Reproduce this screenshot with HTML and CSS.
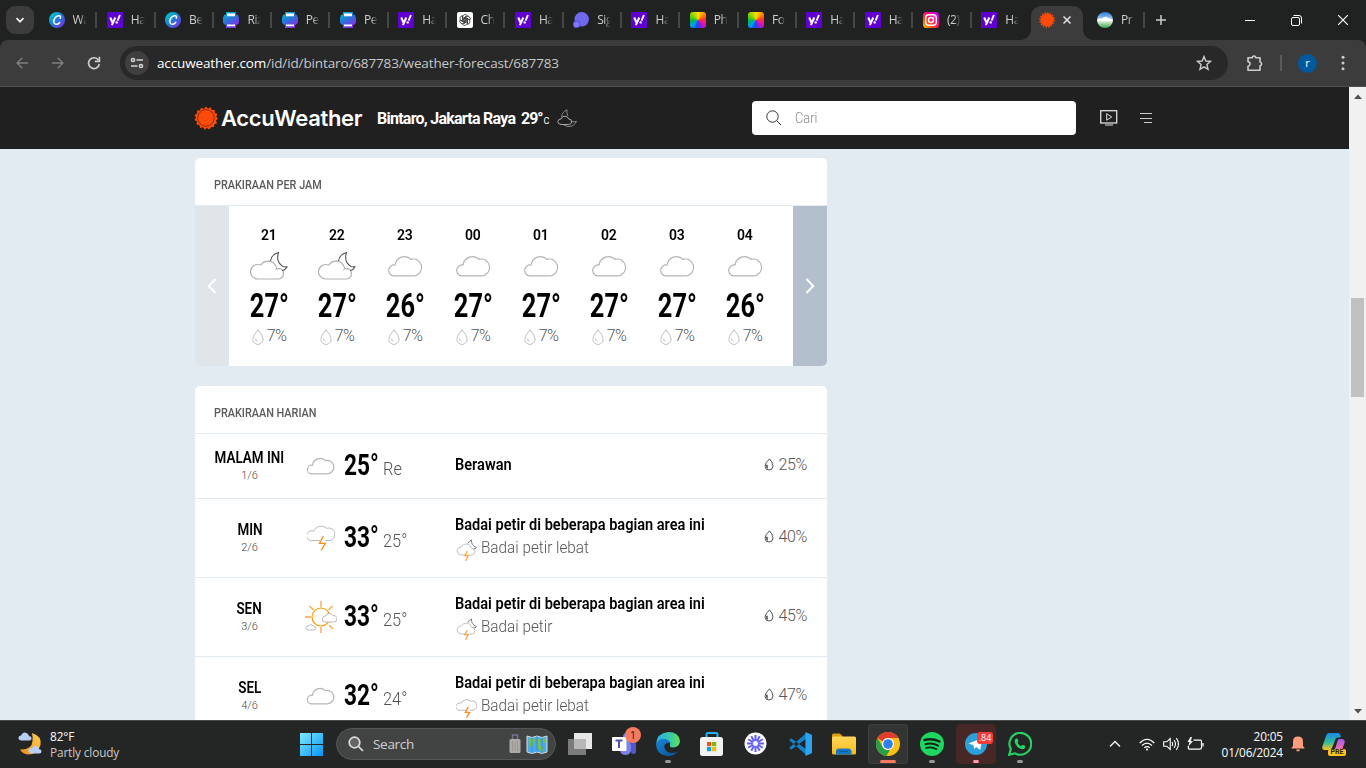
FILE: index.html
```html
<!DOCTYPE html>
<html lang="id">
<head>
<meta charset="utf-8">
<title>Bintaro, Jakarta Raya - AccuWeather</title>
<link rel="stylesheet" href="styles.css">
</head>
<body>
<svg class="defs" width="0" height="0">
  <defs>
    <linearGradient id="gCanva" x1="0" y1="0" x2="1" y2="1"><stop offset=".15" stop-color="#00c4cc"/><stop offset=".5" stop-color="#2378d8"/><stop offset=".95" stop-color="#7d2ae8"/></linearGradient>
    <linearGradient id="gPrint" x1="0" y1="0" x2=".6" y2="1"><stop offset="0" stop-color="#00c4cc"/><stop offset=".5" stop-color="#2378d8"/><stop offset="1" stop-color="#8b2be8"/></linearGradient>
    <linearGradient id="gInsta" x1="0" y1="1" x2="1" y2="0"><stop offset="0" stop-color="#ffc800"/><stop offset=".35" stop-color="#ff4020"/><stop offset=".65" stop-color="#ff0090"/><stop offset="1" stop-color="#9b10ff"/></linearGradient>
    <linearGradient id="gWin" x1="0" y1="0" x2="1" y2="1"><stop offset="0" stop-color="#7deaff"/><stop offset="1" stop-color="#0795f5"/></linearGradient>
    <linearGradient id="gEdge" x1="0" y1="0" x2="1" y2="0"><stop offset="0" stop-color="#2bb2ea"/><stop offset=".6" stop-color="#38cba8"/><stop offset="1" stop-color="#65df51"/></linearGradient>
    <linearGradient id="gEdge2" x1="0" y1="0" x2="1" y2="1"><stop offset="0" stop-color="#1787d8"/><stop offset="1" stop-color="#0c4f96"/></linearGradient>
    <linearGradient id="gFold" x1="0" y1="0" x2="0" y2="1"><stop offset="0" stop-color="#ffd65c"/><stop offset="1" stop-color="#fbb918"/></linearGradient>
    <linearGradient id="gCop" x1="0" y1="0" x2="0" y2="1"><stop offset="0" stop-color="#148de8"/><stop offset=".55" stop-color="#35b99b"/><stop offset="1" stop-color="#ffc61a"/></linearGradient>
    <linearGradient id="gCop2" x1="0" y1="0" x2="0" y2="1"><stop offset="0" stop-color="#a15cf0"/><stop offset="1" stop-color="#ff6e9a"/></linearGradient>
    <linearGradient id="gMoon" x1="1" y1="0" x2="0" y2="1"><stop offset="0" stop-color="#ffd04a"/><stop offset="1" stop-color="#f08a1c"/></linearGradient>
    <linearGradient id="gSky" x1="0" y1="0" x2="0" y2="1"><stop offset="0" stop-color="#2e78d8"/><stop offset=".42" stop-color="#9cc4ee"/><stop offset=".5" stop-color="#ffffff"/><stop offset=".62" stop-color="#d0e8cc"/><stop offset="1" stop-color="#37a548"/></linearGradient>
  </defs>
  <symbol id="canva" viewBox="0 0 16 16"><circle cx="8" cy="8" r="8" fill="url(#gCanva)"/><path d="M11.3 6.200c.7-1.700-.1-2.700-1.600-2.500C6.600 4.100 4.500 7.200 4.800 10c.3 2.900 3.500 3.200 5.900.4" fill="none" stroke="#fff" stroke-width="1.500" stroke-linecap="round"/></symbol>
  <symbol id="yahoo" viewBox="0 0 16 16"><path d="M0 0h16v16H0z" fill="#6001d2"/><path d="M3.200 5.500l2.300 5M8.300 5.500L4.900 13.200" stroke="#fff" stroke-width="2" fill="none"/><path d="M12.900 3l-2.300 5.600" stroke="#fff" stroke-width="1.900"/><circle cx="9.700" cy="10.400" r="1.200" fill="#fff"/></symbol>
  <symbol id="print" viewBox="0 0 16 16"><path d="M3 0h10v2.500l2 .5 1 3v5l-3 2.500V16H3v-2.500L0 11V6l1-3 2-.5z" fill="url(#gPrint)"/><path d="M4 1.500h8v2.700H4zM4 12.500h8v1.800H4z" fill="#fff"/></symbol>
  <symbol id="gpt" viewBox="0 0 16 16"><rect width="16" height="16" rx="2" fill="#fff"/><g fill="none" stroke="#333" stroke-width=".8"><path id="petal" d="M5.600 9.400V5a2.700 2.700 0 0 1 4.900-1.300L7 5.800v3.800"/><use href="#petal" transform="rotate(60 8 8)"/><use href="#petal" transform="rotate(120 8 8)"/><use href="#petal" transform="rotate(180 8 8)"/><use href="#petal" transform="rotate(240 8 8)"/><use href="#petal" transform="rotate(300 8 8)"/></g></symbol>
  <symbol id="signal" viewBox="0 0 16 16"><circle cx="8.700" cy="7.300" r="7.200" fill="#7069ee"/><circle cx="3.600" cy="12.300" r="3.700" fill="#514bd5"/><circle cx="3.600" cy="12.300" r="2.900" fill="#7d78ff"/></symbol>
  <symbol id="insta" viewBox="0 0 16 16"><rect width="16" height="16" rx="3.500" fill="url(#gInsta)"/><rect x="2.700" y="2.700" width="10.600" height="10.600" rx="3" fill="none" stroke="#fff" stroke-width="1.400"/><circle cx="8" cy="8" r="2.500" fill="none" stroke="#fff" stroke-width="1.400"/><circle cx="11" cy="5" r=".7" fill="#fff"/></symbol>
  <symbol id="hill" viewBox="0 0 16 16"><circle cx="8" cy="8" r="8" fill="url(#gSky)"/><path d="M.2 8.500Q2 5.500 5 6.500 8 3.500 11 6q3-.5 4.800 2.500z" fill="#fff"/></symbol>
  <symbol id="sun" viewBox="0 0 24 24"><path fill="#ff4b0a" d="M12 .5l2 2.200 2.700-1.400 1 2.800 3-.1.100 3 2.700 1.100-1.300 2.700L24 12.500l-2 2.100 1 2.800-2.800.9-.3 3-2.900-.3L15.500 23.500 13 22l-2.400 1.700-1.600-2.500-2.900.7-.6-2.900-3-.4.500-3L.5 14 2 11.400.5 9l2.700-1.500-.2-3 3 .1 1-2.900 2.800 1.200z"/><circle cx="12" cy="12" r="8.300" fill="none" stroke="#69240f" stroke-width=".8"/></symbol>
  <symbol id="sunsmall" viewBox="0 0 16 16"><circle cx="8" cy="8" r="6.500" fill="#ff4b0a"/><circle cx="8" cy="8" r="7" fill="none" stroke="#ff4b0a" stroke-width="1.600" stroke-dasharray="1.500 1.250"/></symbol>
  <symbol id="cloud" viewBox="0 0 36 22"><path d="M6.300 20.800A5.400 5.400 0 1 1 8.100 10 9.400 9.400 0 0 1 24 4.300 8.400 8.400 0 1 1 26.500 20.800Z" fill="none" stroke="currentColor" stroke-width="1.200" vector-effect="non-scaling-stroke"/></symbol>
  <symbol id="mooncloud" viewBox="0 0 38 30"><path d="M7.500 28A6.800 6.800 0 0 1 8 13.500q2 0 3 .5A8.500 8.500 0 0 1 25.500 14.500q1.500 3 1 3.500 6.500-1.800 7 4.500-.2 5-5 5.500Z" fill="none" stroke="#b0b0b0" stroke-width="1.200"/><path d="M20.500 10Q21.500 3.500 28.500 1.500 25.500 11 33 15.500 35 16 37 15.800 35 19.500 32 19.500" fill="none" stroke="#555" stroke-width="1.100"/></symbol>
  <symbol id="storm" viewBox="0 0 28 27"><path d="M13 16.500H6A5 5 0 1 1 6.700 7.200 8 8 0 0 1 19.500 4.300 6.400 6.400 0 1 1 20 16.500H18.500" fill="none" stroke="#b8b8b8" vector-effect="non-scaling-stroke"/><path d="M16.500 12l-4 7.300h5.800L14 26.500" fill="none" stroke="#ff8a15" stroke-width="1.300" vector-effect="non-scaling-stroke"/></symbol>
  <symbol id="moonstorm" viewBox="0 0 21 22"><path d="M8.500 16H5Q1 15.500 1 11.800 1.500 8 5.500 8 7 4.500 11 5q3.500.5 4.300 4Q19 9.500 19 12.500T16 16H13" fill="none" stroke="#c3c3c3"/><path d="M12 4.500Q13 2 15.500 1q-.5 5.500 5 7.500-1 1.800-3 1.500" fill="none" stroke="#777"/><path d="M11.500 12L8.500 16.500h3.800L9.500 22" fill="none" stroke="#ffa64d" stroke-width="1.300"/></symbol>
  <symbol id="suncloud" viewBox="0 0 32 32"><circle cx="16" cy="16" r="9" fill="#fff" stroke="#f90" stroke-width="1.200"/><path d="M16 0v6M16 26v6M0 16h6M4.500 5l4 4M27.500 5l-4 4M24 24l4 4" stroke="#ffa142" stroke-width="1.300"/><path d="M20 21a3 3 0 0 1 .6-6 4 4 0 0 1 7.300-.5Q32 14.500 32 18q0 3-3.500 3zM3 29q-3-1-2-3 1-1.500 2.500-1Q6 22 8.500 25q2 .5 2 2.200T8.500 29z" fill="#fff" stroke="#b8b8b8"/></symbol>
  <symbol id="drop" viewBox="0 0 12 16"><path d="M6 .8Q1 6.500.8 10.200A5.200 5.200 0 0 0 11.200 10.200Q11 6.500 6 .8Z" fill="none" stroke="currentColor"/><path d="M3.600 9.500q.2 2.500 1.700 3" fill="none" stroke="currentColor"/></symbol>
  <symbol id="drop2" viewBox="0 0 10 13"><path d="M5.500.8Q1 5 1 8.300 1.300 12 5 12T9 8Q8.500 4 5.500.8Z" fill="none" stroke="#555"/><path d="M2 7q1-.8 1.700 0l.2 4q-1.400-.5-1.900-2z" fill="#555"/></symbol>
</svg>

<div class="screen">
  <div class="tabs">
    <div class="tabsearch"><svg width="10" height="10" viewBox="0 0 10 10"><path d="M1.500 3.200L5 6.700l3.500-3.500" fill="none" stroke="#eee" stroke-width="1.700"/></svg></div>
    <div class="tab"><svg><use href="#canva"/></svg><span>Wa</span></div>
    <div class="tab"><svg><use href="#yahoo"/></svg><span>Ha</span></div>
    <div class="tab"><svg><use href="#canva"/></svg><span>Be</span></div>
    <div class="tab"><svg><use href="#print"/></svg><span>Riz</span></div>
    <div class="tab"><svg><use href="#print"/></svg><span>Pe</span></div>
    <div class="tab"><svg><use href="#print"/></svg><span>Pe</span></div>
    <div class="tab"><svg><use href="#yahoo"/></svg><span>Ha</span></div>
    <div class="tab"><svg><use href="#gpt"/></svg><span>Ch</span></div>
    <div class="tab"><svg><use href="#yahoo"/></svg><span>Ha</span></div>
    <div class="tab"><svg><use href="#signal"/></svg><span>Sig</span></div>
    <div class="tab"><svg><use href="#yahoo"/></svg><span>Ha</span></div>
    <div class="tab"><i class="wheel"></i><span>Ph</span></div>
    <div class="tab"><i class="wheel"></i><span>Fo</span></div>
    <div class="tab"><svg><use href="#yahoo"/></svg><span>Ha</span></div>
    <div class="tab"><svg><use href="#yahoo"/></svg><span>Ha</span></div>
    <div class="tab"><svg><use href="#insta"/></svg><span>(2)</span></div>
    <div class="tab nodiv"><svg><use href="#yahoo"/></svg><span>Ha</span></div>
    <div class="tab active"><svg class="fav"><use href="#sunsmall"/></svg><svg class="x" viewBox="0 0 8 8"><path d="M.5.5l7 7M7.500.5l-7 7" stroke="#e3e3e3" stroke-width="1.500"/></svg></div>
    <div class="tab last"><svg><use href="#hill"/></svg><span>Pr</span></div>
    <svg class="plus" viewBox="0 0 10 10"><path d="M5 0v10M0 5h10" stroke="#ccc" stroke-width="1.500"/></svg>
    <div class="winbtns">
      <svg width="10" height="12" viewBox="0 0 10 12"><path d="M0 6.500h10" stroke="#fff"/></svg>
      <svg width="11" height="11" viewBox="0 0 11 11" fill="none" stroke="#fff"><rect x=".5" y="2.500" width="8" height="8" rx="1.500"/><path d="M2.500.5H8Q10.500.5 10.500 3v5.500"/></svg>
      <svg width="10" height="10" viewBox="0 0 10 10"><path d="M0 0l10 10M10 0L0 10" stroke="#fff" stroke-width="1.100"/></svg>
    </div>
  </div>

  <div class="toolbar">
    <svg class="nav" width="12" height="12" viewBox="0 0 12 12" fill="none" stroke="#7d7d7d" stroke-width="1.400"><path d="M12 6H1M6.300.7L1 6l5.300 5.300"/></svg>
    <svg class="nav" width="12" height="12" viewBox="0 0 12 12" fill="none" stroke="#7d7d7d" stroke-width="1.400"><path d="M0 6h11M5.700.7L11 6l-5.300 5.300"/></svg>
    <svg class="nav" width="14" height="14" viewBox="0 0 14 14" fill="none" stroke="#ccc" stroke-width="1.700"><path d="M11.500 4.200A5.400 5.400 0 1 0 12.300 8"/><path d="M12.400.7v4.600H7.800"/></svg>
    <div class="omnibox">
      <div class="site"><svg width="14" height="12" viewBox="0 0 14 12" fill="none" stroke="#d5d5d5" stroke-width="1.500"><circle cx="3" cy="3" r="1.600"/><path d="M6.500 3H13M1 9h6.500"/><circle cx="11" cy="9" r="1.600"/></svg></div>
      <span class="url"><b>accuweather.com</b>/id/id/bintaro/687783/weather-forecast/687783</span>
      <svg class="star" width="16" height="16" viewBox="0 0 16 16"><path d="M8 1.500l1.800 4.500 4.700.4-3.600 3.100 1.100 4.800L8 11.800l-4 2.500 1.100-4.800L1.500 6.400 6.200 6z" fill="none" stroke="#ccc" stroke-width="1.400"/></svg>
    </div>
    <svg class="ext" width="17" height="18" viewBox="0 0 17 18"><path d="M2 3.700h4.300Q6.300 2 8 2t1.700 1.700h4.300V8q1.600.3 1.600 1.900T14 11.800v4.400H2v-4q2-.4 2-2.300T2 7.800z" fill="none" stroke="#ccc" stroke-width="1.600" stroke-linejoin="round"/></svg>
    <i class="vbar"></i>
    <div class="avatar">r</div>
    <svg class="dots" width="4" height="16" viewBox="0 0 4 16" fill="#ccc"><circle cx="2" cy="2.300" r="1.500"/><circle cx="2" cy="8" r="1.500"/><circle cx="2" cy="13.700" r="1.500"/></svg>
  </div>

  <div class="viewport">
    <div class="page">
      <header>
        <svg class="logo"><use href="#sun"/></svg>
        <span class="brand">AccuWeather</span>
        <span class="place">Bintaro, Jakarta Raya</span>
        <span class="now">29°<small>C</small></span>
        <svg class="nowicon" width="20" height="19" viewBox="0 0 20 19" fill="none" stroke="#8a8a8a"><path d="M4 15.500Q.7 15 .8 12.500 1.200 10 4 10 5 7 8 7.200q3 .3 3.700 2.800 3.300.3 3 3-.5 2.500-3 2.500z" stroke="#aaa"/><path d="M4.500 8Q5 3 10 .8 9.300 4 11 7M15 12.500q3 1 4.500-.2Q17 17.500 12 17.500q-3 0-5-1.500"/></svg>
        <div class="searchbox"><svg width="16" height="16" viewBox="0 0 16 16" fill="none" stroke="#333"><circle cx="6.500" cy="6.500" r="5.700"/><path d="M10.500 10.500L15 15"/></svg><span>Cari</span></div>
        <svg class="tv" width="18" height="16" viewBox="0 0 18 16" fill="none" stroke="#ddd"><rect x=".7" y=".7" width="16" height="12.300" stroke-width="1.300"/><path d="M6.700 3.700v6.500l5-3.200z"/><path d="M5 15h8"/></svg>
        <svg class="menu" width="12" height="12" viewBox="0 0 12 12" stroke="#ccc"><path d="M0 1.500h12M0 6.500h12M4 10.500h8"/></svg>
      </header>

      <main>
        <section class="card">
          <h2><span>PRAKIRAAN PER JAM</span></h2>
          <div class="hourly">
            <div class="arrow prev"><svg width="10" height="16" viewBox="0 0 10 16"><path d="M8.500 1L1.800 8l6.700 7" fill="none" stroke="#fff" stroke-width="2"/></svg></div>
            <div class="hours">
              <div class="hour"><b>21</b><svg class="mc"><use href="#mooncloud"/></svg><strong>27°</strong><span><svg><use href="#drop"/></svg>7%</span></div>
              <div class="hour"><b>22</b><svg class="mc"><use href="#mooncloud"/></svg><strong>27°</strong><span><svg><use href="#drop"/></svg>7%</span></div>
              <div class="hour"><b>23</b><svg class="cl"><use href="#cloud"/></svg><strong>26°</strong><span><svg><use href="#drop"/></svg>7%</span></div>
              <div class="hour"><b>00</b><svg class="cl"><use href="#cloud"/></svg><strong>27°</strong><span><svg><use href="#drop"/></svg>7%</span></div>
              <div class="hour"><b>01</b><svg class="cl"><use href="#cloud"/></svg><strong>27°</strong><span><svg><use href="#drop"/></svg>7%</span></div>
              <div class="hour"><b>02</b><svg class="cl"><use href="#cloud"/></svg><strong>27°</strong><span><svg><use href="#drop"/></svg>7%</span></div>
              <div class="hour"><b>03</b><svg class="cl"><use href="#cloud"/></svg><strong>27°</strong><span><svg><use href="#drop"/></svg>7%</span></div>
              <div class="hour"><b>04</b><svg class="cl"><use href="#cloud"/></svg><strong>26°</strong><span><svg><use href="#drop"/></svg>7%</span></div>
            </div>
            <div class="arrow next"><svg width="10" height="16" viewBox="0 0 10 16"><path d="M1.500 1l6.700 7-6.700 7" fill="none" stroke="#fff" stroke-width="2"/></svg></div>
          </div>
        </section>

        <section class="card daily">
          <h2><span>PRAKIRAAN HARIAN</span></h2>
          <div class="day short">
            <div class="date"><b>MALAM INI</b><small>1/6</small></div>
            <div class="ico"><svg class="dc"><use href="#cloud"/></svg></div>
            <div class="temp"><b>25°</b><span>Re</span></div>
            <div class="phrase"><b>Berawan</b></div>
            <div class="pct"><svg><use href="#drop2"/></svg><span>25%</span></div>
          </div>
          <div class="day">
            <div class="date"><b>MIN</b><small>2/6</small></div>
            <div class="ico"><svg class="ds"><use href="#storm"/></svg></div>
            <div class="temp"><b>33°</b><span>25°</span></div>
            <div class="phrase"><b>Badai petir di beberapa bagian area ini</b><p><svg><use href="#moonstorm"/></svg><span>Badai petir lebat</span></p></div>
            <div class="pct"><svg><use href="#drop2"/></svg><span>40%</span></div>
          </div>
          <div class="day">
            <div class="date"><b>SEN</b><small>3/6</small></div>
            <div class="ico"><svg class="dsun"><use href="#suncloud"/></svg></div>
            <div class="temp"><b>33°</b><span>25°</span></div>
            <div class="phrase"><b>Badai petir di beberapa bagian area ini</b><p><svg><use href="#moonstorm"/></svg><span>Badai petir</span></p></div>
            <div class="pct"><svg><use href="#drop2"/></svg><span>45%</span></div>
          </div>
          <div class="day">
            <div class="date"><b>SEL</b><small>4/6</small></div>
            <div class="ico"><svg class="dc"><use href="#cloud"/></svg></div>
            <div class="temp"><b>32°</b><span>24°</span></div>
            <div class="phrase"><b>Badai petir di beberapa bagian area ini</b><p><svg class="mini"><use href="#storm"/></svg><span>Badai petir lebat</span></p></div>
            <div class="pct"><svg><use href="#drop2"/></svg><span>47%</span></div>
          </div>
        </section>
      </main>
    </div>
    <div class="scroll">
      <svg width="8" height="5" viewBox="0 0 8 5"><path d="M0 5l4-4.500L8 5z" fill="#505050"/></svg>
      <i></i>
      <svg class="down" width="8" height="5" viewBox="0 0 8 5"><path d="M0 0l4 4.500L8 0z" fill="#505050"/></svg>
    </div>
  </div>

  <footer class="taskbar">
    <div class="weather">
      <svg width="24" height="24" viewBox="0 0 24 24"><path d="M14 1Q24 4 22.500 13 19.500 22.500 10 22.500 4.500 22 2 17.500 14 18 14.500 9 15 5 14 1z" fill="url(#gMoon)"/><path d="M3 8.500Q0 8 .5 5.500 1 3.500 3 3.500 5-.5 8.500 1q2 .8 2.500 3 3 .5 2.500 3Q13 8.500 11 8.500zM13 21.500q-3-.5-2.500-3.500.8-2.500 3.500-2Q17 12 20 15q1 1 1 2 2.500.3 2.500 2.500T21 21.500z" fill="#b9d0f6"/></svg>
      <div><b>82°F</b><span>Partly cloudy</span></div>
    </div>
    <svg class="start" width="23" height="23" viewBox="0 0 23 23"><path d="M0 0h11v11H0zM12 0h11v11H12zM0 12h11v11H0zM12 12h11v11H12z" fill="url(#gWin)"/></svg>
    <div class="wsearch">
      <svg width="16" height="16" viewBox="0 0 16 16" fill="none" stroke="#ddd" stroke-width="1.700"><circle cx="6.500" cy="6.500" r="5.300" fill="#666"/><path d="M10.500 10.500l4.500 4.500"/></svg>
      <span>Search</span>
      <svg class="bag" width="12" height="20" viewBox="0 0 12 20"><path d="M3.500 6V1h5v5" fill="none" stroke="#77738c" stroke-width="1.500"/><rect x=".5" y="5" width="11" height="14" rx="1.500" fill="#aeaaa8"/><path d="M3.500 7v10M6 7v10M8.500 7v10" stroke="#9a9695"/></svg>
      <svg class="map" width="22" height="21" viewBox="0 0 22 21"><path d="M1 2l5 1.500L11 2l5 1.500L21 2v16l-5 1.500L11 18l-5 1.500L1 18z" fill="#4aa9ea" stroke="#d6dee2"/><path d="M3 4l6 1-1 5-3 4-2-5zM12 4l3 2-1 5 3 3v4l-5-3zM17 5l3-1v5h-3z" fill="#78bf4f"/><path d="M6 3.500v16M11 2v16M16 3.500v16" stroke="#2984c6" stroke-width=".6"/></svg>
    </div>
    <div class="apps">
      <div class="app"><svg viewBox="0 0 24 24"><rect x="6" y="1" width="18" height="16" fill="#e7e7e7"/><rect x="0" y="7" width="18" height="16" fill="#7b7b7b"/><path d="M6 7h12v10H6z" fill="#b7b7b7"/></svg></div>
      <div class="app"><svg viewBox="0 0 24 24"><circle cx="15" cy="5" r="4" fill="#7b83eb"/><rect x="8" y="8" width="11" height="15" rx="5" fill="#7b83eb"/><rect x="19" y="9" width="5" height="13" rx="2.500" fill="#5059c9"/><rect y="5" width="14.500" height="14" rx="1" fill="#fff"/><path d="M3.500 8.500h7M7 8.500V16" stroke="#4b53bc" stroke-width="2"/></svg><em class="one">1</em></div>
      <div class="app run"><svg viewBox="0 0 24 24"><path d="M0 12Q1 1 12 0q11 0 12 9-.5 6-7 6.500-4 0-3-2.500 1-4-4-5Q4 7 0 12z" fill="url(#gEdge)"/><path d="M0 12Q3 5.500 9.500 7q3.500 1 4 4-6-.5-5 5 1.500 5 8 5 3.500-.2 5.500-1.500-5 5.500-12 4.300Q0 22 0 12z" fill="url(#gEdge2)"/></svg></div>
      <div class="app"><svg viewBox="0 0 24 24"><path d="M6.500 6V2.500q0-1.500 1.500-1.500h8q1.500 0 1.500 1.500V6" fill="none" stroke="#28b3ee" stroke-width="2"/><rect x="0" y="5" width="23" height="19" rx="2.500" fill="#f2f2f2"/><path d="M7 10h4.200v4.200H7z" fill="#f25022"/><path d="M12 10h4.200v4.200H12z" fill="#7fba00"/><path d="M7 15h4.200v4.200H7z" fill="#00a4ef"/><path d="M12 15h4.200v4.200H12z" fill="#ffb900"/></svg></div>
      <div class="app"><svg viewBox="0 0 24 24"><circle cx="11.500" cy="11.500" r="11" fill="#fff"/><g stroke="#625df5" stroke-width="2"><path d="M11.500 3v17M3 11.500h17M7.250 4.140l8.500 14.720M4.140 7.250l14.720 8.500M4.140 15.750l14.720-8.500M7.250 18.860l8.500-14.720"/></g><circle cx="11.500" cy="11.500" r="3" fill="#fff" stroke="#625df5"/></svg></div>
      <div class="app"><svg viewBox="0 0 24 24"><path d="M1 8L3.300 6.200 19 18v5.500zM1 16l2.300 1.800L19 6V.5z" fill="#1380c9"/><path d="M17.500 0L24 3v18l-6.500 3z" fill="#2ba5f0"/></svg></div>
      <div class="app"><svg viewBox="0 0 24 24"><path d="M0 3q0-1.500 1.500-1.500H8L10.500 4v4H0z" fill="#e09b0a"/><rect y="4.500" width="24" height="18" rx="1.500" fill="url(#gFold)"/><path d="M4 22.500v-3Q4 16.500 7 16.500h9q3.500 0 3.500 3v3z" fill="#1479c4"/><path d="M7.500 19.500h8" stroke="#0b5b99"/></svg></div>
      <div class="app sel"><svg viewBox="0 0 24 24"><circle cx="12" cy="12" r="12" fill="#fbc116"/><path d="M1.600 6A12 12 0 0 1 22.400 6H12A6 6 0 0 0 6.800 9.500z" fill="#e33b2e"/><path d="M1.600 6l5.200 9A6 6 0 0 0 14 17.700L10.400 24A12 12 0 0 1 1.600 6z" fill="#28a047"/><circle cx="12" cy="12" r="6" fill="#fff"/><circle cx="12" cy="12" r="4.800" fill="#2e7ff0"/></svg></div>
      <div class="app run"><svg viewBox="0 0 24 24"><circle cx="12" cy="12" r="12" fill="#1ed760"/><g fill="none" stroke="#17241b" stroke-linecap="round"><path d="M4.500 8Q12 5.800 19.500 9.500" stroke-width="2.500"/><path d="M5.500 12.200q6.800-1.800 12.500 1.500" stroke-width="2"/><path d="M6 16q5.800-1.500 10.500 1.200" stroke-width="1.700"/></g></svg></div>
      <div class="app tele"><svg viewBox="0 0 24 24"><circle cx="12" cy="12" r="11" fill="#2ca0da"/><path d="M4.500 11.500L18.500 6 16.200 18l-4-3-2 2-.7-3.700z" fill="#fff"/></svg><em class="num">.84</em></div>
      <div class="app run"><svg viewBox="0 0 24 24"><path d="M1.200 22.800l1.600-5.700A10.900 10.900 0 1 1 7 21.300z" fill="none" stroke="#25d366" stroke-width="2.100"/><path d="M8 6.500l1.500 0 1 2.700-1 1.500q1.200 2.300 3.500 3.500l1.500-1.400 2.700 1.300q.2 2.800-2.700 3.200Q9 16.500 6.800 10.500 6.400 7.500 8 6.500z" fill="#25d366"/></svg></div>
    </div>
    <div class="tray">
      <svg class="up" width="12" height="8" viewBox="0 0 12 8"><path d="M1 6.500l5-5 5 5" fill="none" stroke="#eee" stroke-width="1.500"/></svg>
      <svg class="wifi" width="16" height="13" viewBox="0 0 16 13" fill="none" stroke="#fff" stroke-width="1.200"><path d="M.7 5Q8-2.500 15.300 5M3 7.500q5-4.800 10 0M5.300 9.800q2.700-2.300 5.400 0"/><circle cx="8" cy="11.500" r="1.100" fill="#fff" stroke="none"/></svg>
      <svg class="vol" width="17" height="14" viewBox="0 0 17 14" fill="none" stroke="#fff" stroke-width="1.100"><path d="M.7 4.800h3L7.200 1.500v11L3.700 9.200h-3zM9 5q1.200 2 0 4M11 3q3 4 0 8M13.300 1.200q4.400 5.800 0 11.600"/></svg>
      <svg class="bat" width="17" height="14" viewBox="0 0 17 14" fill="none" stroke="#fff" stroke-width="1.200"><path d="M6.500 3.200h6.800q1.200 0 1.200 1.200v6q0 1.700-1.700 1.700H3Q1.300 12.100 1.300 10.500V9M16 6v3.500"/><path d="M3.500 0L.5 5h2L1.300 9.500 6 4H3.700L5 0z" fill="#fff" stroke="none"/></svg>
      <div class="clock"><span>20:05</span><span>01/06/2024</span></div>
      <svg class="bell" width="14" height="16" viewBox="0 0 14 16"><path d="M7 .5q5 0 5 5V10l1.800 2.500H.2L2 10V5.500q0-5 5-5zM5 13.500h4Q8.500 15.500 7 15.500T5 13.500z" fill="#ff9d7d"/></svg>
      <div class="copilot"><svg width="24" height="24" viewBox="0 0 24 24"><path d="M7 1h9q2 0 3 4l-5 1-4 10Q9 18 6 18H2q-2.500-.5-1.500-4L4 4q.8-3 3-3z" fill="url(#gCop)"/><path d="M17 7h3q3.500.5 2.500 4L20 18h-9q2 0 3-4l1.500-5q.5-2 1.500-2z" fill="url(#gCop2)"/></svg><em>PRE</em></div>
    </div>
  </footer>
</div>
</body>
</html>
```
FILE: styles.css
```css
* { box-sizing: border-box; }
body { margin: 0; width: 1366px; height: 768px; overflow: hidden; font-family: "Open Sans", "Noto Sans", sans-serif; }
svg { display: block; flex: none; }
.defs { position: absolute; }
.screen { display: flex; flex-direction: column; width: 1366px; height: 768px; background: #202222; }

/* Browser tab strip */
.tabs { display: flex; align-items: center; height: 40px; padding-left: 6px; background: #202221; }
.tabsearch { display: flex; align-items: center; justify-content: center; width: 28px; height: 28px; margin-right: 5px; border-radius: 9px; background: #3c3c3c; }
.tab { display: flex; align-items: center; flex: none; width: 58.3px; height: 16px; padding-left: 9.500px; position: relative; }
.tab::after { content: ""; position: absolute; right: 0; top: 0; width: 2px; height: 16px; background: #454646; }
.tab.nodiv::after, .tab.active::after { display: none; }
.tab svg { width: 16px; height: 16px; }
.tab span { width: 14px; margin-left: 8px; white-space: nowrap; color: #cfcfcf; font-size: 12px; line-height: 16px; letter-spacing: -.4px; -webkit-mask-image: linear-gradient(90deg, #000 50%, transparent 98%); mask-image: linear-gradient(90deg, #000 50%, transparent 98%); }
.wheel { width: 16px; height: 16px; border-radius: 3px; background: conic-gradient(#ffe000, #ff9a00 40deg, #ff3a20 80deg, #f012a0 120deg, #8a20e0 155deg, #0a50e8 190deg, #00a0f0 225deg, #00b45a 260deg, #70d000 300deg, #ffe000); }
.tab.active { align-self: flex-end; width: 52px; height: 34px; margin-left: 1px; padding: 0 0 6px 8px; border-radius: 10px 10px 0 0; background: #3c3c3c; }
.tab.active::before { content: ""; position: absolute; left: -10px; right: -10px; bottom: 0; height: 10px; background: radial-gradient(circle at 0 0, transparent 9.500px, #3c3c3c 10px) left / 10px 10px no-repeat, radial-gradient(circle at 100% 0, transparent 9.500px, #3c3c3c 10px) right / 10px 10px no-repeat; }
.tab.active .x { width: 8px; height: 8px; margin-left: 8px; }
.tab.last { width: 62px; padding-left: 14px; }
.plus { width: 10px; height: 10px; margin-left: 11px; }
.winbtns { display: flex; align-items: center; gap: 36px; margin-left: auto; padding-right: 18px; }

/* Address bar */
.toolbar { display: flex; align-items: center; height: 47px; padding-left: 16px; border-bottom: 1px solid #50504f; border-radius: 8px 8px 0 0; background: #3c3c3c; }
.nav { margin-right: 24px; }
.nav + .nav + .nav { margin: 0 19px 0 -1px; }
.omnibox { display: flex; align-items: center; width: 1108px; height: 34px; padding-left: 5px; border-radius: 17px; background: #282828; }
.site { display: flex; align-items: center; justify-content: center; width: 24px; height: 24px; border-radius: 50%; background: #3f3f3f; }
.url { margin-left: 8px; color: #c7c7c7; font-size: 13.500px; letter-spacing: -.13px; white-space: nowrap; }
.url b { color: #fff; font-weight: 400; }
.star { margin: 0 16px 0 auto; }
.ext { margin-left: 18px; }
.vbar { width: 2px; height: 16px; margin-left: 17px; background: #5a5a5a; }
.avatar { width: 19px; height: 19px; margin: 0 24px 0 16px; border-radius: 50%; background: #00599d; color: #fff; font-size: 11px; line-height: 18px; text-align: center; }

/* Page */
.viewport { display: flex; height: 633px; overflow: hidden; }
.page { width: 1349px; background: #e2eaf2; font-family: Roboto, sans-serif; }
header { display: flex; align-items: center; height: 62px; padding-left: 195px; background: #202020; color: #fff; white-space: nowrap; }
.logo { width: 24px; height: 24px; margin-left: -1px; }
.brand { width: 141px; margin-left: 3px; font: 600 22px/30px Inter, sans-serif; letter-spacing: -.35px; }
.place { width: 140px; margin-left: 15px; font-size: 16px; font-weight: 700; letter-spacing: -.75px; }
.now { width: 27px; margin-left: 4px; font-size: 16px; font-weight: 700; letter-spacing: -1px; }
.now small { margin-left: 1px; font-size: 9px; font-weight: 400; }
.nowicon { margin-left: 9px; }
.searchbox { display: flex; align-items: center; width: 324px; height: 34px; margin-left: 175px; padding-left: 14px; border-radius: 4px; background: #fff; color: #888; font-size: 14px; font-weight: 300; }
.searchbox span { margin-left: 13px; transform: scaleX(.92); transform-origin: left; }
.tv { margin-left: 24px; }
.menu { margin-left: 22px; }
main { display: flex; flex-direction: column; gap: 20px; width: 632px; margin: 9px 0 0 195px; }
.card { overflow: hidden; border-radius: 5px; background: #fff; }
h2 { height: 48px; margin: 0; padding-left: 19px; border-bottom: 1px solid #e2eaf2; color: #5a5a5a; font-size: 12px; font-weight: 500; line-height: 54px; }
h2 span { display: inline-block; transform: scaleX(.905); transform-origin: left; }
.hourly { display: flex; height: 160px; }
.arrow { display: flex; align-items: center; justify-content: center; width: 34px; background: #e0e5e9; }
.arrow.next { background: #b3bfcc; }
.hours { display: flex; width: 564px; padding-left: 6px; }
.hour { display: flex; flex-direction: column; align-items: center; flex: none; width: 68px; padding-top: 19px; color: #000; }
.hour b { height: 20px; font-size: 15.500px; font-weight: 600; line-height: 20px; transform: scaleX(.9); }
.hour svg { color: #b5b5b5; }
.hour .mc { width: 38px; height: 30px; margin: 6px 0 5px; }
.hour .cl { width: 36px; height: 22px; margin: 10px 0 9px; }
.hour strong { height: 38px; font-size: 33px; font-weight: 700; line-height: 39px; transform: scaleX(.77); }
.hour > span { display: flex; align-items: center; gap: 3px; height: 20px; margin-top: 2px; color: #555; font-size: 16px; font-weight: 300; letter-spacing: -.6px; line-height: 18px; }
.hour > span svg { width: 12px; height: 16px; margin-top: 1px; color: #c0c0c0; }

.day { display: grid; grid-template-columns: 72px 32px 100px 1fr auto; align-items: center; height: 79px; padding: 0 20px 3px 18px; border-bottom: 1px solid #e2eaf2; }
.day.short { height: 65px; }
.date { display: flex; flex-direction: column; align-items: center; margin: 1px 0 0 1px; white-space: nowrap; }
.date b { font-size: 16px; font-weight: 600; line-height: 20px; transform: scaleX(.84); }
.date small { color: #444; font-size: 11px; font-weight: 300; line-height: 15px; }
.ico { display: flex; justify-content: center; width: 32px; margin-left: 20px; }
.dc { width: 29px; height: 18px; margin: 2px 1px 0 0; color: #b5b5b5; }
.ds { width: 28px; height: 27px; margin-top: 2px; }
.dsun { width: 32px; height: 32px; margin-top: 2px; }
.temp { display: flex; align-items: baseline; margin-left: 27px; }
.temp b { width: 39px; font-size: 29px; font-weight: 700; line-height: 36px; transform: scaleX(.78); transform-origin: left; }
.temp span { color: #555; font-size: 19px; font-weight: 300; transform: scaleX(.86); transform-origin: left; }
.phrase { margin-left: 37.500px; white-space: nowrap; }
.phrase b { display: block; width: 252px; font-size: 16px; font-weight: 600; line-height: 24px; transform: scaleX(.91); transform-origin: left; }
.phrase p { display: flex; align-items: center; height: 24px; margin: 0; color: #555; font-size: 16px; font-weight: 300; line-height: 22px; }
.phrase p span { margin-top: -1px; transform: scaleX(.955); transform-origin: left; }
.phrase p svg { width: 21px; height: 22px; margin: 2px 4px 0 1px; }
.phrase p svg.mini { width: 21px; height: 20px; }
.pct { display: flex; align-items: center; gap: 5px; color: #555; font-size: 16px; font-weight: 300; letter-spacing: -.4px; }
.pct svg { width: 10px; height: 13px; }

.scroll { display: flex; flex-direction: column; align-items: center; width: 17px; padding-top: 7px; background: #f1f1f1; }
.scroll i { width: 13px; height: 99px; margin-top: 199px; background: #c1c1c1; }
.scroll .down { margin: auto 0 6px; }

/* Taskbar */
.taskbar { display: flex; align-items: center; height: 48px; padding-bottom: 1px; border-top: 1px solid #484b49; background: #242625; color: #fff; }
.weather { display: flex; align-items: center; width: 300px; padding-left: 18px; }
.weather div { display: flex; flex-direction: column; margin: -1px 0 0 8px; font-size: 11.800px; line-height: 16px; letter-spacing: -.12px; }
.weather b { font-weight: 400; }
.weather span { color: #c9c9c9; }
.wsearch { display: flex; align-items: center; width: 220px; height: 32px; margin: 0 2px 0 13px; padding-left: 11px; border: 1px solid #555655; border-radius: 16px; background: #424443; }
.wsearch span { margin-left: 9px; color: #d0d0d0; font-size: 13.500px; letter-spacing: -.3px; }
.bag { margin-left: auto; }
.map { margin: 0 7px 0 5px; }
.apps { display: flex; }
.app { position: relative; display: flex; align-items: center; justify-content: center; width: 40px; height: 40px; margin: 0 2px; border-radius: 4px; }
.app > svg { width: 24px; height: 24px; }
.app.run::after, .app.sel::after, .app.tele::after { content: ""; position: absolute; bottom: 1px; left: 17px; width: 6px; height: 3px; border-radius: 2px; background: #989898; }
.app.sel { background: #333535; box-shadow: inset 0 0 0 1px #3c3e3d; }
.app.sel::after { left: 12px; width: 16px; background: #f47b60; }
.app.tele { background: #482827; }
.app.tele::after { background: #ff9aa8; }
.app em { position: absolute; font-style: normal; text-align: center; }
.one { top: 3px; right: 3px; width: 16px; height: 16px; border-radius: 50%; background: #f47b60; color: #222; font-size: 11px; line-height: 16px; }
.num { top: 8px; right: 3px; width: 16px; height: 12px; border-radius: 3px; background: #f33d3a; color: #fff; font-size: 9px; line-height: 12px; }
.tray { display: flex; align-items: center; margin-left: auto; padding-right: 20px; }
.wifi { margin-left: 18px; }
.vol { margin-left: 8px; }
.bat { margin-left: 7px; }
.clock { display: flex; flex-direction: column; width: 79px; margin-top: -1px; text-align: right; font-size: 11.800px; line-height: 16px; letter-spacing: -.12px; }
.bell { margin-left: 8px; }
.copilot { position: relative; margin-left: 17px; }
.copilot em { position: absolute; right: 0; bottom: 0; width: 18px; height: 7px; border-radius: 2px; background: #ffc51a; color: #222; font: 700 7px/7px Roboto, sans-serif; text-align: center; }
```
